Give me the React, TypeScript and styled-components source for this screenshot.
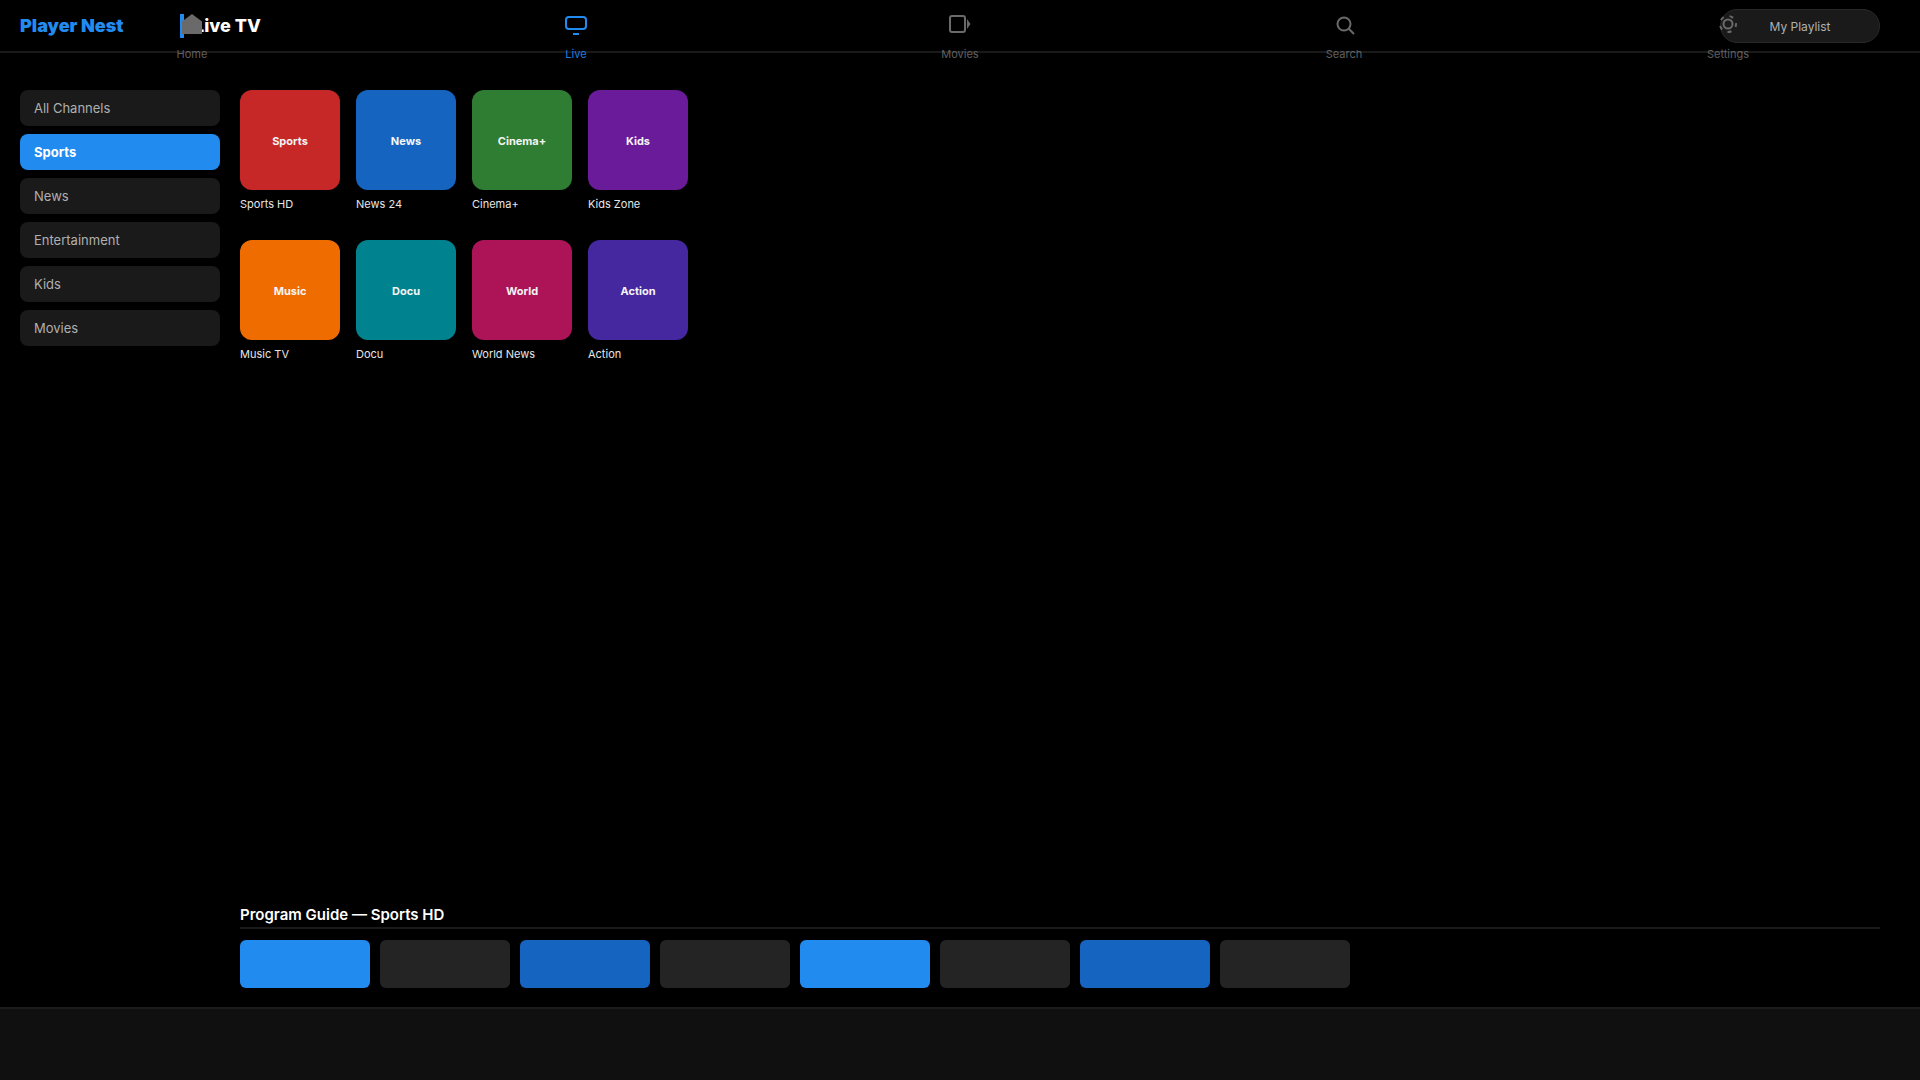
import React, { useState } from "react";
import styled, { createGlobalStyle } from "styled-components";

const color = {
  accent: "#228bf0",
  deep: "#1565c0",
  line: "#1a1a1a",
  surface: "#1a1a1a",
  slot: "#242424",
  muted: "#6a6a6a",
  text: "#b0b0b0",
};

const GlobalStyle = createGlobalStyle`
  *, *::before, *::after { box-sizing: border-box; }
  body {
    margin: 0;
    background: #000;
    color: #fff;
    font-family: Inter, "Liberation Sans", sans-serif;
  }
  button { font: inherit; border: 0; cursor: pointer; }
  h1, h2, p, ul { margin: 0; padding: 0; }
  ul { list-style: none; }
`;

const Page = styled.div`
  display: flex;
  flex-direction: column;
  min-height: 100vh;
`;

const Header = styled.header`
  position: relative;
  display: flex;
  align-items: center;
  height: 53px;
  padding: 1px 40px 0 20px;
  border-bottom: 2px solid ${color.line};
`;

const Brand = styled.p`
  width: 160px;
  font-size: 18px;
  line-height: 24px;
  font-weight: 900;
  color: ${color.accent};
`;

const Title = styled.h1`
  padding-left: 10px;
  border-left: 4px solid ${color.accent};
  font-size: 18px;
  line-height: 24px;
  font-weight: 800;
`;

const PlaylistButton = styled.button`
  width: 160px;
  height: 34px;
  padding: 1px 0 0;
  margin-left: auto;
  border: 1px solid #282828;
  border-radius: 17px;
  background: ${color.surface};
  color: ${color.text};
  font-size: 12px;
`;

/* The tab strip floats over the header and spans the whole window. */
const Tabs = styled.nav`
  position: absolute;
  inset: 12px 0 auto;
  display: grid;
  grid-template-columns: repeat(5, 1fr);
  justify-items: center;
  pointer-events: none;
`;

const Tab = styled.a<{ $active?: boolean }>`
  display: flex;
  flex-direction: column;
  align-items: center;
  gap: 10px;
  color: ${(p) => (p.$active ? color.accent : color.muted)};
  font-size: 11px;
  line-height: 16px;
  text-decoration: none;
  pointer-events: auto;

  span { opacity: 0.9; }
`;

const Icon = styled.svg`
  display: block;
  width: 24px;
  height: 24px;
  fill: none;
  stroke: currentColor;
  stroke-width: 2;
`;

const Main = styled.main`
  flex: 1;
  display: grid;
  grid-template-columns: 200px 1fr;
  gap: 20px;
  padding: 37px 40px 19px 20px;
`;

const Sidebar = styled.aside`
  display: flex;
  flex-direction: column;
  gap: 8px;
`;

const Category = styled.button<{ $active: boolean }>`
  height: 36px;
  padding: 0 14px;
  border-radius: 8px;
  background: ${(p) => (p.$active ? color.accent : color.surface)};
  color: ${(p) => (p.$active ? "#fff" : color.text)};
  font-size: 13px;
  font-weight: ${(p) => (p.$active ? 700 : 400)};
  text-align: left;
`;

const Content = styled.div`
  display: flex;
  flex-direction: column;
  justify-content: space-between;
`;

const ChannelGrid = styled.ul`
  display: grid;
  grid-template-columns: repeat(4, 100px);
  gap: 26px 16px;
`;

const Channel = styled.li`
  display: flex;
  flex-direction: column;
  gap: 4px;
  font-size: 11px;
  line-height: 20px;
  color: #e6e6e6;
`;

const Tile = styled.button<{ $fill: string }>`
  height: 100px;
  padding: 2px 0 0;
  border-radius: 12px;
  background: ${(p) => p.$fill};
  color: #f5f5f5;
  font-size: 11px;
  font-weight: 700;
`;

const GuideTitle = styled.h2`
  padding-bottom: 2px;
  margin-bottom: 11px;
  border-bottom: 2px solid ${color.line};
  font-size: 15px;
  line-height: 20px;
  font-weight: 600;
`;

const Slots = styled.div`
  display: flex;
  gap: 10px;
`;

const Slot = styled.div<{ $fill: string }>`
  width: 130px;
  height: 48px;
  border-radius: 6px;
  background: ${(p) => p.$fill};
`;

const Footer = styled.footer`
  height: 73px;
  border-top: 2px solid #1c1c1c;
  background: #101010;
`;

const tabs = [
  {
    label: "Home",
    icon: <path d="M12 2 22 9.5V22H2V9.5Z" fill="currentColor" stroke="none" />,
  },
  {
    label: "Live",
    icon: (
      <>
        <rect x="2" y="5" width="20" height="12" rx="3" />
        <path d="M9 22h6" />
      </>
    ),
  },
  {
    label: "Movies",
    icon: (
      <>
        <rect x="2" y="4" width="15" height="16" rx="2" />
        <path d="M19 7v10l3.500-5Z" fill="currentColor" stroke="none" />
      </>
    ),
  },
  {
    label: "Search",
    icon: (
      <>
        <circle cx="12" cy="12" r="6.500" />
        <path d="m16.500 16.500 5.500 5.500" />
      </>
    ),
  },
  {
    label: "Settings",
    icon: (
      <>
        <circle cx="12" cy="12" r="4.500" />
        <circle cx="12" cy="12" r="8" strokeDasharray="4 6" strokeDashoffset="1" />
      </>
    ),
  },
];

const categories = ["All Channels", "Sports", "News", "Entertainment", "Kids", "Movies"];

const channels = [
  { short: "Sports", name: "Sports HD", fill: "#c62828" },
  { short: "News", name: "News 24", fill: "#1565c0" },
  { short: "Cinema+", name: "Cinema+", fill: "#2e7d32" },
  { short: "Kids", name: "Kids Zone", fill: "#6a1b9a" },
  { short: "Music", name: "Music TV", fill: "#ef6c00" },
  { short: "Docu", name: "Docu", fill: "#00838f" },
  { short: "World", name: "World News", fill: "#ad1457" },
  { short: "Action", name: "Action", fill: "#4527a0" },
];

const slots = [
  color.accent, color.slot, color.deep, color.slot,
  color.accent, color.slot, color.deep, color.slot,
];

export default function App() {
  const [category, setCategory] = useState("Sports");

  return (
    <Page>
      <GlobalStyle />
      <Header>
        <Brand>Player Nest</Brand>
        <Title>Live TV</Title>
        <PlaylistButton>My Playlist</PlaylistButton>
        <Tabs>
          {tabs.map((t) => (
            <Tab key={t.label} href={`#${t.label.toLowerCase()}`} $active={t.label === "Live"}>
              <Icon viewBox="0 0 24 24" aria-hidden="true">{t.icon}</Icon>
              <span>{t.label}</span>
            </Tab>
          ))}
        </Tabs>
      </Header>
      <Main>
        <Sidebar>
          {categories.map((c) => (
            <Category key={c} $active={c === category} onClick={() => setCategory(c)}>
              {c}
            </Category>
          ))}
        </Sidebar>
        <Content>
          <ChannelGrid>
            {channels.map((c) => (
              <Channel key={c.name}>
                <Tile $fill={c.fill}>{c.short}</Tile>
                {c.name}
              </Channel>
            ))}
          </ChannelGrid>
          <section>
            <GuideTitle>Program Guide — Sports HD</GuideTitle>
            <Slots>
              {slots.map((fill, i) => (
                <Slot key={i} $fill={fill} />
              ))}
            </Slots>
          </section>
        </Content>
      </Main>
      <Footer />
    </Page>
  );
}
